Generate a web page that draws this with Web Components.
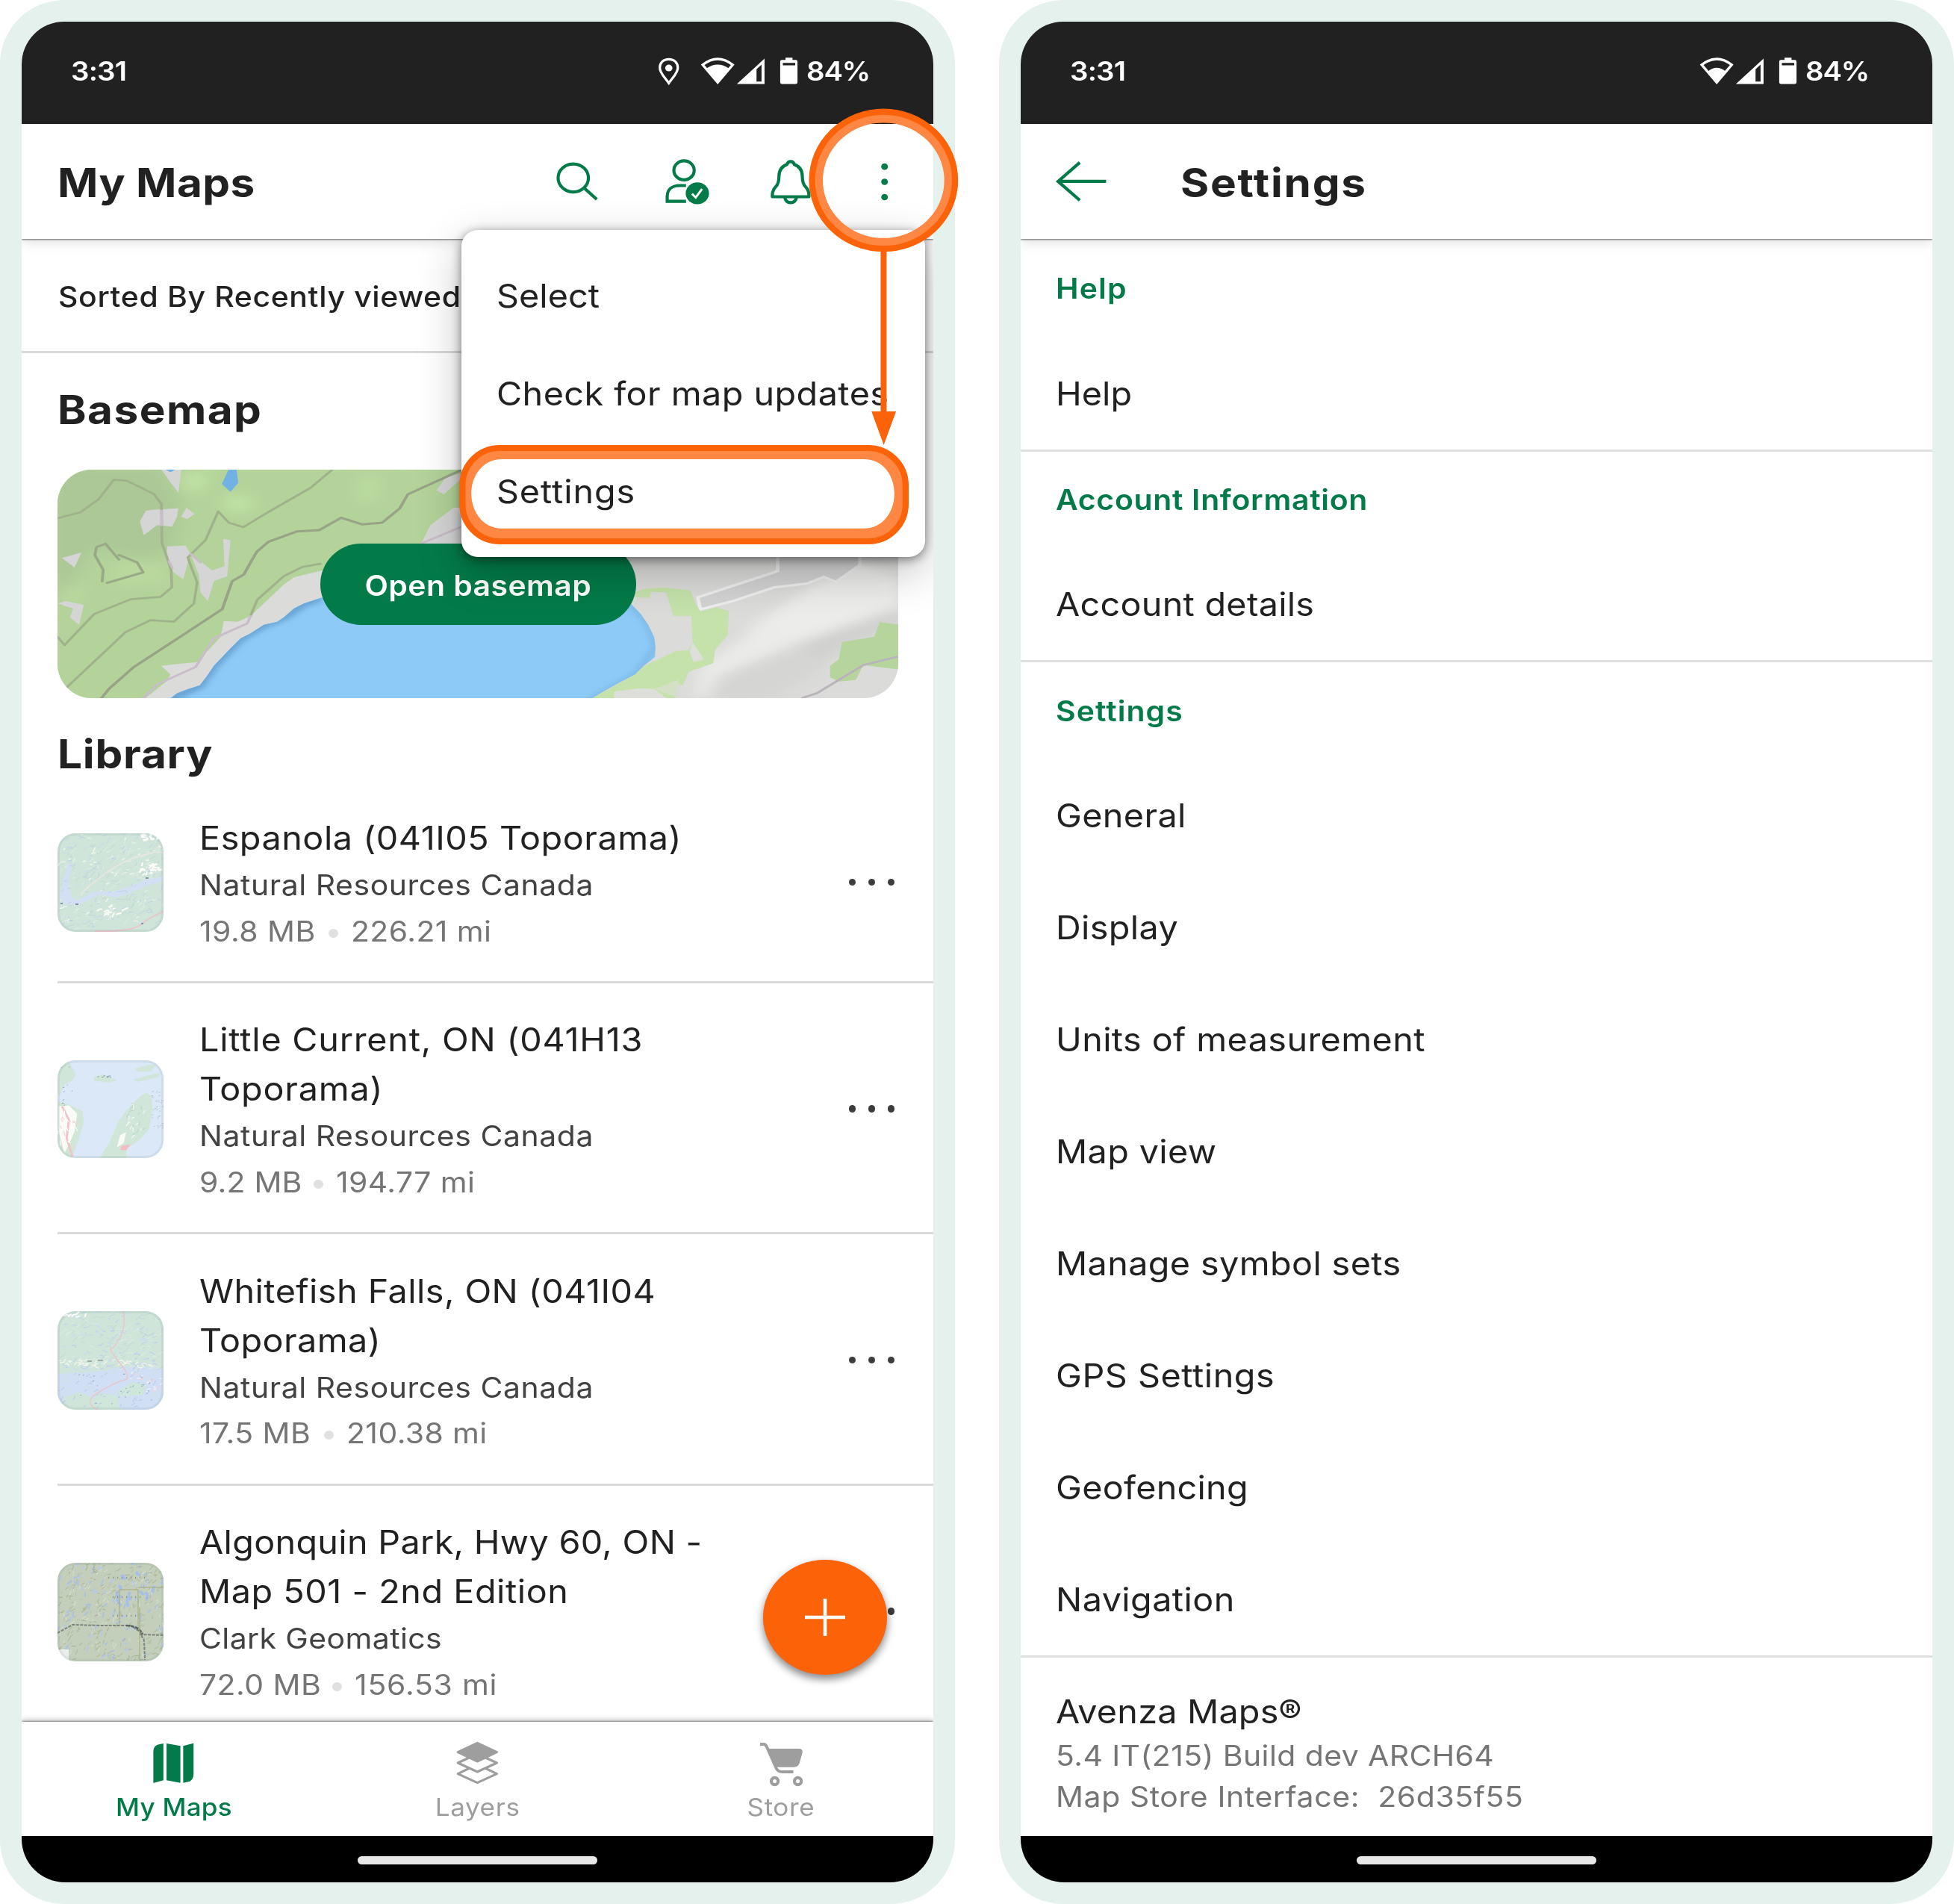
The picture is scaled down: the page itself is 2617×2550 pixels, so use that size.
<!DOCTYPE html>
<html lang="en">
<head>
<meta charset="utf-8">
<title>My Maps – Settings</title>
<style>
body{margin:0;background:#fff;font-family:Inter,"Liberation Sans",sans-serif;color:#212121;width:2617px;height:2550px;overflow:hidden}
main{display:flex;gap:59px;width:2617px;height:2550px}
</style>
</head>
<body>
<main>
  <phone-frame>
    <status-bar slot="status" location></status-bar>
    <app-bar><wide-text size="54" weight="700" ls=".33">My Maps</wide-text><bar-actions slot="end"></bar-actions></app-bar>
    <sort-row><wide-text size="37.8" weight="500" ls=".6">Sorted By Recently viewed</wide-text></sort-row>
    <section-title style="height:150px;padding-bottom:5.5px"><wide-text size="54" weight="700" ls="1.35">Basemap</wide-text></section-title>
    <base-map><wide-text size="37.8" weight="600" ls=".42">Open basemap</wide-text></base-map>
    <section-title style="height:73.4px;padding-top:38px"><wide-text size="54" weight="700" ls=".74">Library</wide-text></section-title>
    <map-row thumb="espanola" by="Natural Resources Canada" bls=".54" tls=".5" size="19.8 MB" dist="226.21 mi">Espanola (041I05 Toporama)</map-row>
    <map-row thumb="current" by="Natural Resources Canada" bls=".54" tls=".72" sls=".2" gap="8.3" size="9.2 MB" dist="194.77 mi">Little Current, ON (041H13<br>Toporama)</map-row>
    <map-row thumb="whitefish" by="Natural Resources Canada" bls=".54" tls=".42" size="17.5 MB" dist="210.38 mi">Whitefish Falls, ON (041I04<br>Toporama)</map-row>
    <map-row last thumb="algonquin" by="Clark Geomatics" bls=".4" tls=".29" gap="9.2" dls=".75" size="72.0 MB" dist="156.53 mi">Algonquin Park, Hwy 60, ON -<br><span style="letter-spacing:.5px">Map 501 - 2nd Edition</span></map-row>
    <tab-bar slot="bottom"></tab-bar>
    <add-button slot="float"></add-button>
    <overflow-menu slot="float">
      <wide-text size="43.2" ls=".04">Select</wide-text>
      <wide-text size="43.2" ls=".42">Check for map updates</wide-text>
      <wide-text size="43.2" ls=".82">Settings</wide-text>
    </overflow-menu>
    <call-out slot="over"></call-out>
  </phone-frame>
  <phone-frame>
    <status-bar slot="status"></status-bar>
    <app-bar back><wide-text size="54" weight="700" ls="1.64">Settings</wide-text></app-bar>
    <settings-group ls="1.1" label="Help" items="Help" style="--head:131.5px"></settings-group>
    <settings-group ls=".65" label="Account Information" items="Account details"></settings-group>
    <settings-group ls="1" label="Settings" style="--head:130.6px" items="General|Display|Units of measurement|Map view|Manage symbol sets|GPS Settings|Geofencing|Navigation"></settings-group>
    <about-block></about-block>
  </phone-frame>
</main>
<script>
const K = 1.082; // the screens are drawn slightly wider than tall
const GREEN = '#037b48';
const define = (name, render) => customElements.define(name, class extends HTMLElement {
  connectedCallback() {
    if (this.shadowRoot) return;
    this.attachShadow({mode: 'open'}).innerHTML = render(this);
  }
});
const icon = (x, y, w, h, sx, sy, body) =>
  `<svg width="${(w / sx).toFixed(2)}" height="${(h / sy).toFixed(2)}" viewBox="${x} ${y} ${w} ${h}" preserveAspectRatio="none" fill="none">${body}</svg>`;
const NS = '<style>svg{display:block;flex:none;overflow:visible}svg *{vector-effect:non-scaling-stroke}</style>';

define('wide-text', el => `<style>
  :host{display:block;flex:none;width:max-content;white-space:nowrap;transform:scaleX(${K});transform-origin:var(--origin,0) 50%;
  font-size:${el.getAttribute('size')}px;font-weight:${el.getAttribute('weight') || 400};letter-spacing:${el.getAttribute('ls') || 0}px}
  </style><slot></slot>`);
const wt = (size, weight, ls, text, style = '') => `<wide-text size="${size}" weight="${weight}" ls="${ls}" style="${style}">${text}</wide-text>`;

define('phone-frame', () => `<style>
  :host{display:block;position:relative;flex:none;box-sizing:border-box;width:1279px;height:2550px;padding:29.3px 29px 0;background:#e5f1ed;border-radius:86px}
  .screen{position:relative;display:flex;flex-direction:column;width:1220.8px;height:2491.3px;border-radius:57px 57px 58px 58px;overflow:hidden;background:#fff}
  .content{flex:1;min-height:0;overflow:hidden}
  .nav{flex:none;height:61.3px;background:#000;display:flex;align-items:center;justify-content:center;padding-top:3.5px;box-sizing:border-box}
  .nav i{display:block;width:321px;height:11.5px;border-radius:6px;background:#e8e8e8}
  </style>
  <div class="screen"><slot name="status"></slot><div class="content"><slot></slot></div><slot name="bottom"></slot><div class="nav"><i></i></div><slot name="float"></slot></div>
  <slot name="over"></slot>`);

define('status-bar', el => {
  const loc = el.hasAttribute('location');
  const pin = icon(584, 210, 66, 110, 2.24, 2.8, '<path d="M617 222C600 222 590 236 590 254C590 275 606 291 617 312C628 291 644 275 644 254C644 236 634 222 617 222Z" stroke="#fff" stroke-width="3.2"/><ellipse cx="617" cy="255" rx="11" ry="12.5" fill="#fff"/>');
  const wifi = icon(712, 210, 104, 110, 2.24, 2.8, `<path d="M719 243Q764 199 809 243L764 309Z" stroke="#fff" stroke-width="3.4"/><path d="${loc ? 'M730 257Q764 227 798 257L764 312Z' : 'M737 268Q764 240 791 268L764 312Z'}" fill="#fff"/>`);
  const cell = icon(820, 210, 87, 110, 2.24, 2.8, '<path d="M822 315L905 220V315Z M881 260V306H896V242Z" fill="#fff" fill-rule="evenodd"/>');
  const bat = icon(950, 210, 56, 110, 2.24, 2.8, '<path d="M957 225H968V216H989V225H999Q1004 225 1004 231V309Q1004 315 999 315H957Q952 315 952 309V231Q952 225 957 225Z M960 236V245H997V236Z" fill="#fff" fill-rule="evenodd"/>');
  return NS + `<style>
  :host{display:flex;flex:none;box-sizing:border-box;height:137px;background:#212121;color:#fff;align-items:center;justify-content:space-between;padding:0 28.5px 6.4px 65.800px}
  .r{display:flex;align-items:center;width:340.8px}
  </style>${wt(35.6, 600, -.8, '3:31', 'margin-top:2px')}<div class="r">${loc ? `<div style="margin-right:27.7px">${pin}</div>` : '<div style="width:57.2px"></div>'}${wifi}<div style="width:1.8px"></div>${cell}<div style="width:19.2px"></div>${bat}<div style="width:11.2px"></div>${wt(35.4, 600, -1, '84%', 'margin-top:2px')}</div>`;
});

define('app-bar', el => NS + `<style>
  :host{display:flex;position:relative;z-index:1;box-sizing:border-box;height:154px;background:#fff;align-items:center;padding-left:${el.hasAttribute('back') ? 47.4 : 48}px;box-shadow:0 1px 2px rgba(0,0,0,.55),0 4px 16px rgba(0,0,0,.13)}
  .t{margin-top:1.6px}.back{width:166.400px}.sp{flex:1}
  </style>${el.hasAttribute('back') ? `<div class="back">${icon(165, 600, 155, 162, 2.24, 2.8, `<path d="M316 681H172M237 610L172 681L237 752" stroke="${GREEN}" stroke-width="4.2"/>`)}</div>` : ''}<div class="t"><slot></slot></div><div class="sp"></div><slot name="end"></slot>`);

define('bar-actions', () => NS + `<style>:host{display:flex;padding-right:58.4px}.a{margin-left:84.8px}.b{margin-left:77.2px}.c{margin-left:89.7px}</style>
  <div>${icon(276, 590, 134, 180, 2.24, 2.8, `<g stroke="${GREEN}" stroke-width="4.2"><ellipse cx="331.5" cy="666.5" rx="45.5" ry="52.5"/><path d="M364 704L402 747"/></g>`)}</div>
  <div class="a">${icon(600, 590, 145, 180, 2.24, 2.8, `<g stroke="${GREEN}" stroke-width="4.2"><ellipse cx="663" cy="638" rx="30.5" ry="35.5"/><path d="M669 695H650C625 695 612.500 712 612.500 736V754H669"/></g><ellipse cx="703" cy="724" rx="35" ry="41" fill="${GREEN}"/><path d="M687 726L698 740L717 708" stroke="#fff" stroke-width="3"/>`)}</div>
  <div class="b">${icon(918, 590, 132, 180, 2.24, 2.8, `<path d="M974 616Q976 605 985 605Q994 605 996 616Q1020 627 1020 660Q1020 688 1030 700Q1041 714 1040 737H930Q929 714 940 700Q950 688 950 660Q950 627 974 616ZM967 738Q970 759 985 759Q1000 759 1003 738" stroke="${GREEN}" stroke-width="4.200" stroke-linejoin="round"/>`)}</div>
  <div class="c">${icon(1251, 590, 30, 180, 2.24, 2.8, `<g fill="${GREEN}"><ellipse cx="1266" cy="624" rx="10" ry="12"/><ellipse cx="1266" cy="681" rx="10" ry="12"/><ellipse cx="1266" cy="738.500" rx="10" ry="12"/></g>`)}</div>`);

define('sort-row', () => `<style>:host{display:flex;box-sizing:border-box;height:153px;align-items:center;padding:4px 0 0 48.500px;border-bottom:3px solid #d9d9d9}</style><slot></slot>`);
define('section-title', () => `<style>:host{display:flex;align-items:center;padding-left:48px}</style><slot></slot>`);

define('base-map', () => `<style>
  :host{display:block;position:relative;width:1126px;height:306.300px;margin-left:47.700px;border-radius:46px;overflow:hidden}
  svg{display:block}
  .btn{position:absolute;left:351.900px;top:99px;width:423.500px;height:109px;padding-top:3px;box-sizing:border-box;border-radius:55px;background:${GREEN};color:#fff;display:flex;align-items:center;justify-content:center;--origin:50%}
  </style>
  <svg width="1126" height="306.300" viewBox="0 0 1126 306.300">
  <defs>
    <filter id="b" x="-50%" y="-50%" width="200%" height="200%"><feGaussianBlur stdDeviation="24"/></filter>
    <filter id="s" x="-20%" y="-20%" width="140%" height="140%"><feGaussianBlur stdDeviation="9"/></filter>
    <clipPath id="w"><path d="M505 1130L530 1105L560 1090L598 1073L620 1035L640 995L665 960L690 925L720 885L750 865L790 830L830 818L850 800L880 765L910 745L960 722L1100 680L1500 640L1800 660L1894 750L1920 785L1943 830L1961 880L1965 920L1963 960L1930 995L1904 1030L1853 1065L1807 1100L1771 1130Z"/></clipPath>
  </defs>
  <g transform="translate(-76.3,-69) scale(.44643,.33333)">
    <path fill="#dbdbda" d="M160 200H2710V1140H160Z"/>
    <g filter="url(#b)">
      <path fill="#ececeb" d="M2240 850L2560 560L2700 640V780L2480 880L2400 960Z"/><path fill="#ebebe9" d="M2100 1000L2300 820L2400 900L2250 1060L2080 1130Z"/>
      <path fill="#cfcfcd" d="M2400 900L2700 760V830L2560 900L2450 980L2380 950Z"/>
      <path fill="#d5d5d3" d="M2150 1040L2400 900L2480 1000L2300 1140H2120Z"/>
    </g>
    <path fill="#b3d39a" d="M160 200H1385V360L1360 360L1300 425L1262 504L1000 612L965 612L880 640L850 668L750 795L712 818L670 815L660 880L590 980L530 988L482 995L510 1030L500 1055L430 1130H160Z"/>
    <g filter="url(#b)">
      <path fill="#abc896" d="M160 190H480L540 340L520 520L430 570L280 520L230 620L160 740Z"/>
      <path fill="#c3e5a6" d="M545 230L620 210L610 290L560 290Z"/><path fill="#c2e4a5" d="M670 310L760 320L750 375L670 370Z"/>
      <path fill="#bcdda1" d="M1080 240L1140 230L1120 330L1070 340Z"/><path fill="#bad99f" d="M350 560L480 590L500 660L340 670Z"/>
      <path fill="#bad99f" d="M190 680L260 680L230 740L180 740Z"/>
    </g>
    <g fill="#d6d5d5">
      <path d="M483 207H542L534 300L512 262ZM455 368L533 362L530 395L515 436L470 430L430 470L418 415L436 372ZM558 360L582 385L560 406L542 396ZM500 515L555 512L570 545L560 590L548 648L510 610L498 570ZM570 545L635 612L672 595L668 485L690 490L680 635L640 655L622 735L600 700L595 630ZM184 562L243 540L222 600ZM172 745L195 735L250 750L236 830L208 800L218 765ZM1308 290L1335 240L1385 220V240L1330 306ZM1262 504L1290 430L1360 360L1385 400V504Z"/>
    </g>
    <path fill="#70b2e4" d="M684 207H708L713 260L690 296L664 265Z"/><path fill="#70b2e4" d="M495 207H525L510 217Z"/>
    <g fill="none" stroke-linejoin="round" stroke-linecap="round">
      <g stroke="#a0b28c" stroke-width="8">
        <path d="M172 402L240 378L295 325L340 247L380 252L460 305L483 345L484 500L512 610L514 680L480 718L390 728L280 788L192 912L172 880M200 1080L375 860L450 812L520 818L580 745L590 660L570 590L562 560L615 490L653 375L685 420L728 438L800 380L930 280L995 207M960 585L905 598L850 635L770 730L750 795"/>
      </g>
      <path stroke="#99a886" stroke-width="8.500" d="M355 568L315 505L288 518L283 550L308 610L305 655M355 550L410 580L428 620L320 662"/>
      <path stroke="#98a387" stroke-width="9" d="M300 1130L325 1088L400 1000L665 768L695 655L730 628L768 538L805 496L890 455L956 450L1022 400L1085 427L1145 420L1198 362L1222 306L1385 207"/>
      <g stroke="#c8bdc8" stroke-width="8"><path d="M750 795L740 825L640 885L585 1000L470 1070L425 1130M1262 504L1385 435M483 372V430M505 575L515 600M570 545L600 580"/></g>
    </g>
    <path fill="#8dcaf7" d="M505 1130L530 1105L560 1090L598 1073L620 1035L640 995L665 960L690 925L720 885L750 865L790 830L830 818L850 800L880 765L910 745L960 722L1100 680L1500 640L1800 660L1894 750L1920 785L1943 830L1961 880L1965 920L1963 960L1930 995L1904 1030L1853 1065L1807 1100L1771 1130Z"/>
    <g clip-path="url(#w)"><path filter="url(#s)" fill="none" stroke="#5d97c8" stroke-opacity=".75" stroke-width="30" d="M505 1130L598 1073L640 995L720 885L790 830L850 800L910 745L960 722"/><path filter="url(#s)" fill="none" stroke="#6aa3d2" stroke-opacity=".4" stroke-width="20" d="M1894 750L1943 830L1965 920L1904 1030L1771 1130"/></g>
    <g transform="translate(1344,-180) scale(1.0285,1)">
      <path fill="#d3d3d3" d="M727 900L960 795V690H1200V770L1130 838L1095 818L1045 845L950 860L830 915L735 948Z"/>
      <path fill="none" stroke="#eeeeee" stroke-width="10" d="M960 690V795L727 900L735 948L830 915L950 860L1045 845L1095 818L1130 838L1200 770V690"/>
      <path fill="#c4e2aa" d="M545 880L570 866L625 860L706 872L720 925L735 958L780 940L817 955L815 1050L778 1110L772 1165L700 1200L683 1255L660 1240V1305H590L560 1270L485 1278L482 1310H415L450 1280L545 1210L570 1175L665 1115L700 1112L712 1080L708 975H657L634 880L590 878L587 902L545 900Z"/>
      <path fill="#dedfda" d="M482 1310L485 1278L560 1265L600 1268L640 1310ZM712 1080L745 1150L715 1160L703 1120Z"/>
      <path fill="#d3e0c4" d="M600 1268L672 1230L662 1300Z"/>
      <path fill="#b6d59d" d="M1258 1000L1315 1010V1190L1210 1172L1188 1232L1140 1238L1113 1222V1175L1138 1150L1148 1080L1242 1058Z"/>
      <path fill="none" stroke="#b9b3ba" stroke-width="8" d="M1030 1305L1075 1285L1210 1172L1312 1138"/>
    </g>
  </g></svg>
  <div class="btn"><slot></slot></div>`);

/* Map thumbnails: a few drawn shapes plus seeded speckle for the terrain. */
function rng(seed) { return () => (seed = (seed * 1664525 + 1013904223) >>> 0) / 4294967296; }
function specks(r, n, colors, len, w, box = [0, 0, 143, 132], ang = -.5) {
  const paths = colors.map(() => '');
  for (let i = 0; i < n; i++) {
    const x = box[0] + r() * box[2], y = box[1] + r() * box[3], a = ang + (r() - .5) * 1.6, l = len * (.4 + r());
    const dx = Math.cos(a) * l, dy = Math.sin(a) * l, q = (r() - .5) * l;
    paths[i % colors.length] += `M${x.toFixed(1)} ${y.toFixed(1)}q${(dx / 2 + q).toFixed(1)} ${(dy / 2 - q).toFixed(1)} ${dx.toFixed(1)} ${dy.toFixed(1)}`;
  }
  return paths.map((d, i) => `<path d="${d}" fill="none" stroke="${colors[i]}" stroke-width="${w}" stroke-linecap="round"/>`).join('');
}
const THUMBS = {
  espanola() {
    const r = rng(7);
    return '<rect width="143" height="132" fill="#d0e5da"/>' + specks(r, 150, ['#c6ddd6', '#dae9e0'], 8, 1.600) +
      specks(r, 70, ['#eff5ec', '#e3efe4'], 4, 1.600) + specks(r, 16, ['#fbfcf8'], 5, 2.400, [108, 42, 28, 14]) + specks(r, 14, ['#f8faf5'], 5, 2.200, [48, 98, 45, 14]) + specks(r, 6, ['#fff'], 5, 3, [112, 2, 22, 8]) +
      '<path d="M3 85L8 60L14 40L20 42L14 65L18 85L28 90L48 78L76 78L100 70L120 62L142 58V64L115 72L92 82L78 86L56 82L28 96L8 94Z" fill="#d3dff3"/>' +
      specks(r, 150, ['#b9cdea', '#c6d8ec'], 4.500, .9) + '<path d="M30 82Q70 45 100 34T142 26" stroke="#e9e6e0" stroke-width="1.600" fill="none"/><path d="M50 131Q100 132 112 122T143 104" stroke="#ecc4cc" stroke-width="1.800" fill="none"/><path d="M24 95h4M118 60h4M4 94h3M112 121h3" stroke="#8292a8" stroke-width="2"/>';
  },
  current() {
    const r = rng(21);
    return '<rect width="143" height="132" fill="#dbe8f7"/><g transform="scale(.6124,.408) translate(-125,-884)">' +
      '<path fill="#cfe6d8" d="M125 884H148L165 930L158 950L140 965L130 1000H125ZM205 940L225 930L255 950L240 957L205 952ZM295 912L320 900L340 898L330 920L300 922ZM290 948L320 935L350 925L345 940L300 955ZM125 1018L150 1030L180 1050L182 1090L172 1140L155 1210H125ZM215 1210L240 1150L258 1085L275 1050L300 1010L318 990L330 1000L333 1040L325 1110L305 1145L275 1175L278 1210Z"/>' +
      '<path fill="#fafbf6" d="M128 1035L150 1032L168 1060L162 1120L150 1160L140 1190L128 1120ZM262 1130L275 1120L270 1155L255 1170Z"/><path d="M135 1035L150 1080L145 1140L158 1200" stroke="#f0c5ca" stroke-width="3" fill="none"/><path fill="#f4bcc4" d="M265 1165L285 1160L275 1180L262 1178Z"/></g>' +
      specks(r, 22, ['#bdd8ca', '#f4f8f2'], 5, 1.200, [92, 58, 24, 50], -1) + specks(r, 22, ['#fff', '#efd6d4'], 5, 1.200, [1, 64, 24, 50], 1) +
      specks(r, 30, ['#a9b9cf'], 1.500, .9, [125, 42, 16, 50]) + specks(r, 8, ['#8fa0b5'], 1.500, 1.200, [50, 18, 25, 6]) + specks(r, 10, ['#8fa0b5'], 1.500, 1, [5, 5, 20, 60]);
  },
  whitefish() {
    const r = rng(33);
    return '<rect width="143" height="132" fill="#cfe5da"/><path d="M0 84L60 80L90 74L143 76V132H90L60 122L30 108L10 115L0 132Z" fill="#d0dff4"/><path d="M80 108L100 95L118 98L115 112L85 114ZM48 132L52 110L80 112L82 132Z" fill="#cfe6da"/>' +
      specks(r, 120, ['#c5ddd6', '#dae9e2'], 8, 1.400, [0, 0, 143, 80], -.1) + specks(r, 100, ['#bfd0ec', '#cad9f1'], 5, 1.200, [0, 0, 143, 80], -.1) +
      specks(r, 80, ['#cfe3dc', '#bccdea'], 4, 1.200, [0, 78, 143, 52]) + specks(r, 34, ['#f4f5ec'], 5, 1.300, [0, 66, 143, 7], 0) + specks(r, 10, ['#fff'], 4, 2, [8, 0, 30, 8]) + specks(r, 26, ['#f6f8fb', '#efd2dc'], 3, 1.200, [95, 78, 44, 34]) +
      '<path d="M88 0Q92 20 84 35T72 50T84 70T90 92T56 108T54 132" stroke="#e9c6cb" stroke-width="1.500" fill="none"/><path d="M40 67h6M54 66h7" stroke="#8f9a9a" stroke-width="1.300"/>' + specks(r, 26, ['#9badc6'], 1.500, 1.100, [25, 84, 105, 40]);
  },
  algonquin() {
    const r = rng(55);
    return '<rect width="143" height="132" fill="#c4cfbb"/>' + specks(r, 260, ['#d6decf', '#b5c1a8', '#abba9d'], 5, 1.100, undefined, -1) +
      specks(r, 80, ['#a9c1e3', '#b4c9ea'], 5, 2, undefined, -1) + specks(r, 12, ['#a6bfe8'], 6, 4, [78, 0, 55, 50], 1) + specks(r, 80, ['#a8aa84', '#98a38a'], 4, .8) +
      '<path d="M0 94L20 83L60 84L98 84L110 92L116 104L117 130M110 96L143 97" stroke="#7d837d" stroke-width="2" stroke-dasharray="4 1.500" fill="none"/><path d="M92 84Q110 85 114 96" stroke="#5f665f" stroke-width="2.600" stroke-dasharray="5 1" fill="none"/>' +
      '<path d="M68 20h50M74 46h42M74 71h34" stroke="#8b9885" stroke-width="2.600" stroke-dasharray="1.200 4.800" fill="none"/><path d="M83 84V36H108V84M108 33H143M110 60V130" stroke="#a7a879" stroke-width="1" fill="none"/><path d="M0 116H15V132H0Z" fill="#eceeea"/>';
  }
};

define('map-row', el => {
  const a = (n, d) => el.getAttribute(n) ?? d;
  const last = el.hasAttribute('last');
  return NS + `<style>
  :host{display:flex;box-sizing:border-box;align-items:center;margin-left:47.700px;padding:42.600px 51.500px ${last ? 40 : 36.800}px 0;border-bottom:${last ? 0 : 3}px solid #d9d9d9}
  .th{width:142.700px;height:131.600px;border-radius:24px;overflow:hidden;flex:none;position:relative;top:${last ? -.5 : -.9}px}
  .th::after{content:"";position:absolute;inset:0;border-radius:24px;box-shadow:inset 0 0 0 3px rgba(90,120,130,.1)}
  .c{flex:1;margin-left:47.600px}.m{display:flex;align-items:center;height:61px}
  .dot{width:13px;height:12px;border-radius:50%;background:#e0e0e0;margin:6px 17px 0 18px;flex:none}
  .x{display:flex;gap:16.500px;position:relative;top:-1.400px}.x i{width:9.600px;height:9.600px;border-radius:50%;background:#3c3c3c}
  </style><div class="th"><svg width="143" height="132" viewBox="0 0 143 132">${THUMBS[a('thumb')]()}</svg></div>
  <div class="c"><wide-text size="43.200" ls="${a('tls')}" style="line-height:66px"><slot></slot></wide-text>${wt(37.8, 400, a('bls'), a('by'), 'line-height:61px;color:#424242')}
  <div class="m">${wt(37.8, 400, a('sls', .44), a('size'), `color:#757575;margin-right:${a('gap', 11.5)}px`)}<i class="dot"></i>${wt(37.8, 400, a('dls', .4), a('dist'), 'color:#757575')}</div></div><div class="x"><i></i><i></i><i></i></div>`;
});

define('tab-bar', () => {
  const maps = icon(480, 245, 144, 175, 2.376, 3, `<g fill="${GREEN}"><path d="M520 254V402L488 413V287Q488 260 508 257Z"/><path d="M530 254L574 264V412L530 402Z"/><path d="M583 264L616 253V378Q616 402 599 408L583 412Z"/></g>`);
  const layers = icon(1446, 245, 144, 175, 2.376, 3, `<g stroke="#9e9e9e" stroke-width="3.200" stroke-linejoin="round" fill="#fff"><path d="M1518 338L1580 376L1518 412L1456 376Z"/><path d="M1518 296L1580 332L1518 368L1456 332Z"/><path fill="#9e9e9e" d="M1518 252L1580 289L1518 326L1456 289Z"/></g>`);
  const store = icon(770, 840, 127, 182, 2.063, 3, `<g stroke="#9e9e9e"><path d="M774 852H783Q790 852 793 864L817 943Q821 963 835 963H866" stroke-width="3.900"/><path fill="#9e9e9e" stroke="none" d="M797 870H883Q893 872 891 886L883 928Q879 944 868 944H817Z"/><ellipse cx="814.500" cy="1000.500" rx="9.500" ry="14" stroke-width="4.200"/><ellipse cx="878.500" cy="1000.500" rx="9.500" ry="14" stroke-width="4.200"/></g>`);
  return NS + `<style>
  :host{display:flex;flex:none;height:153.400px;background:#fff;position:relative;z-index:1;box-shadow:0 -1px 2px rgba(0,0,0,.36),0 -3px 7px rgba(0,0,0,.22);color:#9e9e9e}
  div{flex:1;display:flex;flex-direction:column;align-items:center;padding-top:25.800px;--origin:50%}
  </style><div style="color:${GREEN}">${maps}${wt(32.4, 550, .2, 'My Maps', 'line-height:60px;margin-top:1px;position:relative;left:.8px')}</div>
  <div>${layers}${wt(32.4, 400, .6, 'Layers', 'line-height:60px;margin-top:1px')}</div><div>${store}${wt(32.4, 400, .55, 'Store', 'line-height:60px;margin-top:-1.300px')}</div>`;
});

define('add-button', () => NS + `<style>:host{position:absolute;z-index:2;left:993px;top:2059.700px;width:166.200px;height:153.700px;border-radius:50%;background:#fc6208;box-shadow:0 6px 10px rgba(0,0,0,.3),0 5px 14px rgba(0,0,0,.22);display:flex;align-items:center;justify-content:center}</style>
  <svg width="54" height="50" viewBox="0 0 54 50"><path d="M27 0V50M0 25H54" stroke="#fff" stroke-width="4.600"/></svg>`);

define('overflow-menu', () => `<style>
  :host{position:absolute;z-index:3;left:589px;top:278.700px;width:620.500px;height:438px;box-sizing:border-box;border-radius:22px;background:#fff;box-shadow:0 3px 14px rgba(0,0,0,.48),0 20px 60px rgba(0,0,0,.24);display:flex;flex-direction:column;padding:23px 0 0 47.200px;line-height:131.200px}
  </style><slot></slot>`);

/* Orange ring, arrow and pill that point out the Settings entry. */
define('call-out', () => `<style>:host{position:absolute;z-index:5;left:0;top:0;width:1300px;height:800px}svg{display:block}</style>
  <svg width="1300" height="800" fill="none">
  <path fill="#fd8743" fill-rule="evenodd" d="M1183.300 149A96 92.500 0 1 1 1183.200 149ZM1183.300 164.400A81.300 77.200 0 1 0 1183.400 164.400Z"/>
  <ellipse cx="1183.300" cy="241.400" rx="95.800" ry="91.800" stroke="#fc6208" stroke-width="8.200"/>
  <path fill="#fc6208" d="M1179.400 336H1187.400V551H1200.100L1183.600 596L1167.200 551H1179.400Z"/>
  <path fill="#fd8743" fill-rule="evenodd" d="M667 598H1166Q1215 600 1215 662Q1215 725 1166 727H667Q617 725 617 662Q617 600 667 598ZM672 615C646 615 631.200 638 631.200 661S646 707.700 672 707.700H1157C1183 707.700 1197.800 685 1197.800 661S1183 615 1157 615Z"/>
  <rect x="619.300" y="600" width="593.600" height="125" rx="50" ry="50" stroke="#fc6208" stroke-width="8.200"/></svg>`);

define('settings-group', el => {
  const ls = {'Help': .03, 'Units of measurement': .36, 'Account details': .25, 'Geofencing': .25, 'GPS Settings': .5, 'Navigation': .4};
  return `<style>
  :host{display:block;padding-left:47.400px;border-bottom:3px solid #e0e0e0}
  .h{height:var(--head,129.300px);display:flex;align-items:center;color:${GREEN}}
  .i{height:149.900px;display:flex;align-items:center}
  </style><div class="h">${wt(37.8, 600, el.getAttribute('ls'), el.getAttribute('label'))}</div>` +
    el.getAttribute('items').split('|').map(t => `<div class="i">${wt(43.2, 400, ls[t] ?? .35, t)}</div>`).join('');
});

define('about-block', () => `<style>:host{display:block;padding:40px 0 0 47.400px}</style>` +
  wt(43.2, 400, .2, 'Avenza Maps®', 'line-height:64px') +
  wt(37.8, 400, .4, '5.4 IT(215) Build dev ARCH64', 'line-height:55px;color:#757575') +
  wt(37.8, 400, .57, 'Map Store Interface:&nbsp; 26d35f55', 'line-height:55px;color:#757575'));
</script>
</body>
</html>
